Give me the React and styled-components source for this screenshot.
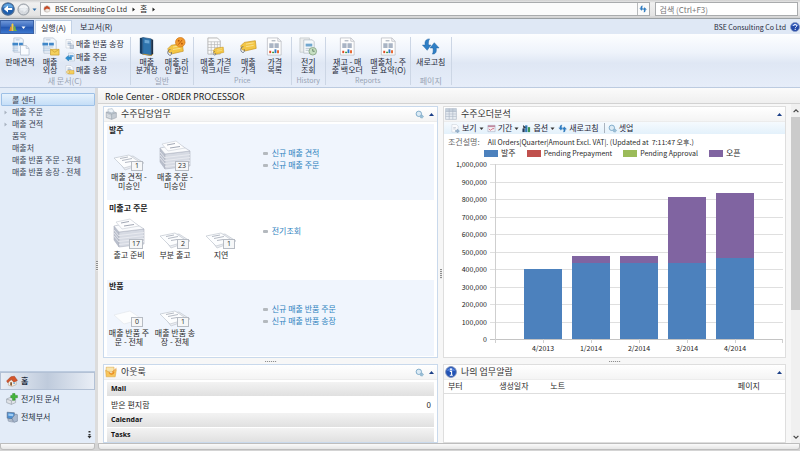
import React from "react";
import styled, { createGlobalStyle, css } from "styled-components";

const Global = createGlobalStyle`
  *, *::before, *::after { box-sizing: border-box; }
  body {
    margin: 0;
    background: #f7f7f7;
    color: #2b2b2b;
    font-family: "Noto Sans CJK KR", "Open Sans", sans-serif;
    font-size: 8px;
    line-height: 12px;
  }
  button, input, table { font: inherit; color: inherit; }
  button { border: 0; padding: 0; background: none; cursor: pointer; }
  h1, h2, h3, p, ul { margin: 0; padding: 0; font-size: inherit; font-weight: 400; }
  ul { list-style: none; }
  a { color: inherit; text-decoration: none; }
  svg { display: block; flex: none; }
`;

/* ---------- Icons ---------- */

const Icon = ({ size = 10, box = 20, height, children }) => (
  <svg width={size} height={height || size} viewBox={`0 0 ${box} ${height ? (box * height) / size : box}`} aria-hidden="true">
    {children}
  </svg>
);

const Sheet = ({ x = 2, y = 1, w = 14, h = 17 }) => (
  <path d={`M${x} ${y}h${w - 4}l4 4v${h - 4}h-${w}z`} fill="#fbfcfe" stroke="#b3bbc8" strokeWidth="0.8" />
);

const Tag = ({ x = 0, y = 0, s = 1 }) => (
  <g transform={`translate(${x} ${y}) scale(${s})`}>
    <path d="M1 7L5 3L18 1L19 10L6 13L2 11z" fill="#f3c644" stroke="#c79322" strokeWidth="0.8" />
    <path d="M7 5l9-1.500M7 8l9-1.500" stroke="#fae59b" strokeWidth="1" />
    <path d="M4 8C1 8 0 12 2 14s4 0 3-3" fill="none" stroke="#5d6570" strokeWidth="1" />
  </g>
);

const QuoteIcon = () => (
  <Icon size={19}>
    <path d="M3 1h8l2 2v13H3z" fill="#eef4fb" stroke="#aab8ca" strokeWidth="0.7" />
    <path d="M1.500 6h6v3h-6zM8.500 6h4v3h-4z" fill="#3f86c8" />
    <path d="M1.500 10.500h6M1.500 12.500h6M1.500 14.500h6M5 3h4" stroke="#9db9d6" strokeWidth="0.8" />
    <path d="M10 9h6l3 3v7h-9z" fill="#fafcff" stroke="#a9b7c9" strokeWidth="0.7" />
    <path d="M16 9v3h3" fill="none" stroke="#a9b7c9" strokeWidth="0.7" />
  </Icon>
);
const InvoiceIcon = () => (
  <Icon size={19}>
    <path d="M3 1h10l3 3v13H3z" fill="#f1f6fb" stroke="#aab8ca" strokeWidth="0.7" />
    <path d="M1.500 6h6v3h-6zM8.500 6h5v3h-5z" fill="#3f86c8" />
    <path d="M2 10.500h11M2 12.500h8M2 14.500h8M5 3h5" stroke="#9db9d6" strokeWidth="0.8" />
    <path d="M10 13h9v6h-9z" fill="#f4d05c" stroke="#c99c2e" strokeWidth="0.7" />
    <path d="M10 13l4.500 3 4.500-3" fill="none" stroke="#c99c2e" strokeWidth="0.7" />
  </Icon>
);
const CreditMemoIcon = () => (
  <Icon>
    <Sheet />
    <path d="M5 6h7M5 9h8M5 12h8" stroke="#7996b8" strokeWidth="1.300" />
    <path d="M10 12h7v7h-7z" fill="#c6d2e1" stroke="#8495ab" strokeWidth="0.8" />
  </Icon>
);
const OrderIcon = () => (
  <Icon>
    <path d="M7 2h9l3 3v13H7z" fill="#e8f0f8" stroke="#9fb0c5" strokeWidth="0.8" />
    <path d="M9 6h8v4H9z" fill="#6aa8dd" />
    <path d="M1 12l6-5v3h6v5H7v3z" fill="#2d91d2" stroke="#1c6da8" strokeWidth="0.8" />
  </Icon>
);
const SalesInvoiceIcon = () => (
  <Icon>
    <Sheet />
    <path d="M5 6h6M5 9h8" stroke="#7996b8" strokeWidth="1.300" />
    <path d="M7 11h11v7H7z" fill="#f4cf5c" stroke="#c29127" strokeWidth="0.8" />
    <circle cx="6" cy="14" r="3" fill="#f7e19a" stroke="#b88d2c" strokeWidth="0.8" />
  </Icon>
);
const JournalIcon = () => (
  <Icon size={19}>
    <path d="M3 1l3-.5v18L3 17z" fill="#173f66" />
    <path d="M6 .5L15 2v17.500L6 18z" fill="#2f74ad" stroke="#1b4a78" strokeWidth="0.7" />
    <path d="M8 3l5 .8v3L8 6.200z" fill="#6ba6d4" />
    <path d="M15 2l2 1v15l-2 1.500z" fill="#1c3048" />
    <path d="M6 18l9 1.500 2-1.500" fill="none" stroke="#c99a3a" strokeWidth="1" />
  </Icon>
);
const DiscountIcon = () => (
  <Icon size={19}>
    <Tag x={0} y={6} s={0.9} />
    <circle cx="14" cy="5.500" r="5" fill="#f29a2e" stroke="#cf7412" strokeWidth="0.7" />
    <path d="M12 8l4-5" stroke="#b85a0c" strokeWidth="1" />
    <circle cx="12.300" cy="4" r="1" fill="#b85a0c" />
    <circle cx="15.700" cy="7" r="1" fill="#b85a0c" />
  </Icon>
);
const WorksheetIcon = () => (
  <Icon size={19}>
    <path d="M2 1h10l3 3v14H2z" fill="#fbfbfb" stroke="#a6a6a6" strokeWidth="0.8" />
    <path d="M2 5h13M2 8h13M2 11h13M2 14h13M5.500 5v13M9 5v13M12 5v13" stroke="#b5b5b5" strokeWidth="0.7" />
    <Tag x={7} y={10} s={0.62} />
  </Icon>
);
const PriceIcon = () => (
  <Icon size={19}>
    <Tag x={1} y={3} s={0.9} />
  </Icon>
);
const ReportIcon = () => (
  <Icon size={19}>
    <path d="M2.500 1h11l3.500 3.500V19h-14.500z" fill="#fdfdfd" stroke="#b9bcc2" strokeWidth="0.8" />
    <path d="M13.500 1v3.500H17" fill="none" stroke="#b9bcc2" strokeWidth="0.8" />
    <path d="M7 4h4" stroke="#7a8696" strokeWidth="0.8" />
    <path d="M4.500 6.500h4.500v5H4.500zM10 6.500h4.500v5H10z" fill="#a9b4c4" />
    <path d="M4.500 14.500h2V17h-2z" fill="#e04a24" />
    <path d="M7.500 15.500h2V17h-2z" fill="#3e9a3c" />
    <path d="M10 13h2v4h-2z" fill="#3078c8" />
    <path d="M12.700 14h2v3h-2z" fill="#e7632a" />
  </Icon>
);
const NavigateIcon = () => (
  <Icon size={19}>
    <path d="M1 1h10v15H1z" fill="#eceeee" stroke="#c2c7c9" strokeWidth="0.8" />
    <path d="M5 3h9l2 2v12H5z" fill="#f5f8fa" stroke="#b3bcc4" strokeWidth="0.8" />
    <path d="M7 7h7v3H7z" fill="#71a7cf" />
    <path d="M7 12h6M7 14h5" stroke="#a9b9c5" strokeWidth="0.8" />
    <circle cx="14.500" cy="15" r="4" fill="#c6dfc2" stroke="#7d9c7c" strokeWidth="0.8" />
    <path d="M14.500 12.500V15h2" fill="none" stroke="#5c7a62" strokeWidth="0.9" />
  </Icon>
);
const RefreshIcon = ({ size = 9 }) => (
  <Icon size={size}>
    <path d="M9 2C5 2 3.500 5 4.500 8.500H1.500L6.500 14l4-5.500H8C7.500 6.500 7.800 4 9 2z" fill="#2f7fc6" stroke="#1d5f9e" strokeWidth="0.5" />
    <path d="M12 18c4 0 4.500-3 4-6.500h3L14 6l-4.500 5.500h3c.5 2 .5 4.500-.5 6.500z" fill="#2f7fc6" stroke="#1d5f9e" strokeWidth="0.5" />
  </Icon>
);
const BackIcon = () => (
  <Icon size={14}>
    <circle cx="10" cy="10" r="9" fill="#1f5fae" stroke="#5a7391" strokeWidth="1.500" />
    <path d="M2.500 8a7.800 7.800 0 0 1 15 0z" fill="#5fa3df" />
    <path d="M4 10l6-5v3.500h6v3h-6V15z" fill="#fff" />
  </Icon>
);
const ForwardIcon = () => (
  <Icon size={13}>
    <circle cx="10" cy="10" r="8.500" fill="#d5d9de" stroke="#8f969e" strokeWidth="1.500" />
    <path d="M3 8a7.500 7.500 0 0 1 14 0z" fill="#f3f5f7" />
    <path d="M16 10l-6-4.500v3H5v3h5v3z" fill="#e9edf1" />
  </Icon>
);
const Caret = ({ color = "#333", size = 5 }) => (
  <Icon size={size} box={10}>
    <path d="M1 3h8L5 8z" fill={color} />
  </Icon>
);
const RightCaret = ({ color = "#222" }) => (
  <Icon size={5} box={10}>
    <path d="M3 1l5 4-5 4z" fill={color} />
  </Icon>
);
const CollapseIcon = () => (
  <Icon size={5} box={10}>
    <path d="M0 8l5-6 5 6z" fill="#1b3f87" />
  </Icon>
);
const CompanyIcon = () => (
  <Icon size={8}>
    <circle cx="10" cy="10" r="8" fill="#d9d4d0" stroke="#a99b91" />
    <path d="M3 7l7-5 7 5v5l-7-3-7 4z" fill="#c64a26" />
    <path d="M8 11h8v5H8z" fill="#f6efe8" />
  </Icon>
);
const AppIcon = () => (
  <Icon size={10}>
    <path d="M1 18c2-1 3-4 3-7s3-3 3 0v7z" fill="#e9862b" />
    <path d="M7 18V6c0-4 4-4 4 0v12z" fill="#f5cf3b" />
    <path d="M12 18v-8c0-3 3-3 3 0s1 7 4 8z" fill="#6fb344" />
  </Icon>
);
const HelpIcon = () => (
  <Icon size={10}>
    <circle cx="10" cy="10" r="9" fill="#2349a8" stroke="#8b9cc4" strokeWidth="1.500" />
    <path d="M3 8a7.500 7.500 0 0 1 14 0z" fill="#5c80d6" />
    <path d="M7 8c0-4 6.500-4 6.500-.5 0 2.500-3 2.500-3 5M10.400 14v2" fill="none" stroke="#fff" strokeWidth="2" />
  </Icon>
);
const InfoIcon = () => (
  <Icon size={12}>
    <circle cx="10" cy="10" r="9" fill="#2152b5" stroke="#7d8fb8" strokeWidth="1.500" />
    <path d="M3 8a7.500 7.500 0 0 1 14 0z" fill="#5785de" />
    <path d="M8 9h3v6M8 15.500h5" fill="none" stroke="#fff" strokeWidth="1.800" />
    <circle cx="10" cy="5.500" r="1.600" fill="#fff" />
  </Icon>
);
const ActivitiesIcon = () => (
  <Icon size={12}>
    <path d="M2 7l9-2 8 3v8l-8 3-9-3z" fill="#c4cbd3" stroke="#8f98a3" strokeWidth="0.8" />
    <path d="M2 7l9 3 8-2M11 10v9" fill="none" stroke="#929ba6" strokeWidth="0.8" />
    <path d="M5 2l7-1 3 5-4 2-6-2z" fill="#eef3f8" stroke="#98a8ba" strokeWidth="0.8" />
    <path d="M3 11l7 3M3 13.500l7 3" stroke="#eef0f2" strokeWidth="1" />
  </Icon>
);
const OutlookIcon = () => (
  <Icon size={12}>
    <path d="M2 2h13v7H2z" fill="#f9e5ad" stroke="#d79c35" strokeWidth="0.8" />
    <path d="M1 7l9 5 9-6-2 12H2z" fill="#f8c65c" stroke="#d79c35" strokeWidth="0.8" />
    <path d="M7 11c2 4 7 3 8-1" fill="none" stroke="#e98b23" strokeWidth="2" />
    <path d="M12 10l7-6" stroke="#e98b23" strokeWidth="1.500" />
  </Icon>
);
const GridIcon = () => (
  <Icon size={12}>
    <path d="M1 1h18v18H1z" fill="#e8edf3" stroke="#a8b4c3" />
    <path d="M1 1h18v5H1z" fill="#c3ceda" />
    <path d="M1 6h18M1 10h18M1 14h18M7 1v18M13 1v18" stroke="#a8b4c3" />
  </Icon>
);
const SetupIcon = () => (
  <Icon size={9}>
    <circle cx="8.500" cy="8.500" r="6" fill="#dcebf5" stroke="#76a5c5" strokeWidth="2" />
    <path d="M13 13l3-2 3 4-3 3-4-1z" fill="#9fc3da" stroke="#6797b8" />
  </Icon>
);
const ViewIcon = () => (
  <Icon size={9}>
    <Sheet />
    <path d="M5 8h6M5 11h5" stroke="#a5b0bf" strokeWidth="1.200" />
    <path d="M10 14h4v-3l5 5-5 4v-3h-4z" fill="#9ab4cf" stroke="#6886a6" strokeWidth="0.7" />
  </Icon>
);
const PeriodIcon = () => (
  <Icon size={9}>
    <path d="M2 3h16v14H2z" fill="#f6f2f6" stroke="#8f9db5" />
    <path d="M2 3h16v4H2z" fill="#c08aa0" />
    <path d="M4 11l4 3 3-3 5-1" fill="none" stroke="#c95870" strokeWidth="1.800" />
  </Icon>
);
const OptionsIcon = () => (
  <Icon size={9}>
    <path d="M1 10h5v8H1z" fill="#263c5c" />
    <path d="M7 3h5v15H7z" fill="#3079b8" />
    <path d="M13 7h5v11h-5z" fill="#3c9256" />
    <path d="M2 2l7 6-3 .5L4 12z" fill="#1c2735" />
  </Icon>
);
const HomeIcon = () => (
  <Icon size={12}>
    <path d="M4 9v8l6 2 7-3V8z" fill="#f6ede1" stroke="#a5917d" strokeWidth="0.8" />
    <path d="M1 10l7-7 6-1 5 7-6 3-4-5-6 6z" fill="#d5562b" stroke="#9c3517" strokeWidth="0.8" />
    <path d="M7 12h3v6l-3-1z" fill="#8a5a33" />
    <path d="M12 12h3v3h-3z" fill="#7fb0d8" />
  </Icon>
);
const PostedIcon = () => (
  <Icon size={12}>
    <path d="M1 10l7-3 8 3v6l-7 3-8-3z" fill="#e0e3e7" stroke="#8a939e" strokeWidth="0.9" />
    <path d="M1 10l8 3 7-3M9 13v6" fill="none" stroke="#8a939e" strokeWidth="0.9" />
    <path d="M11 1h4v3h4v4h-4v4h-4V8H8V4h3z" fill="#43b63a" stroke="#25821f" strokeWidth="0.8" />
  </Icon>
);
const DepartmentsIcon = () => (
  <Icon size={12}>
    <path d="M2 2l12 1v11L2 12z" fill="#4c8fd2" stroke="#50637e" />
    <path d="M4 4l8 .8v4L4 8z" fill="#9ecbf2" />
    <path d="M10 12l6-7 3 1v11l-6 2z" fill="#a9b9ce" stroke="#5f6f88" strokeWidth="0.8" />
    <path d="M3 14l8 1.500v3L4 17z" fill="#c0c9d6" stroke="#6c7b91" strokeWidth="0.8" />
  </Icon>
);

/* Flat documents, or a tall pile when the count is high */
const StackDrawing = ({ kind }) => (
  <svg width="32" height="32" viewBox="0 0 32 32" aria-hidden="true">
    {kind === "pile" && (
      <g strokeWidth="0.6" stroke="#aeb4c1">
        <path d="M1 8l5 6v15l-5-7z" fill="#b9bfcc" />
        <path d="M6 14l25-3v15L6 29z" fill="#d6dae3" />
        <path d="M1 8L20 4l11 7L6 14z" fill="#fafbfd" />
        <path d="M6 17.500l25-3M6 20.500l25-3M6 23.500l25-3M6 26.500l25-3M1 12l5 6M1 15l5 6M1 18l5 6" fill="none" stroke="#eceef3" strokeWidth="0.8" />
        <path d="M3 4l14-3 9 7-17 3z" fill="#fdfdfe" stroke="#c6cbd4" />
        <path d="M8 5l8-1.500M11 8l10-1.500" stroke="#a2a8b5" strokeWidth="1" />
      </g>
    )}
    {kind === "papers" && (
      <g stroke="#b9bfc9" strokeWidth="0.6">
        <path d="M3 18l17-2 11 7-19 7z" fill="#eceef2" />
        <path d="M1 18l15-3 12 8-17 5z" fill="#fcfdfe" />
        <path d="M7 18.500l8-1.500M9 20.500l10-2M12 22.500l6-1" stroke="#a2a8b5" strokeWidth="0.8" />
      </g>
    )}
    {kind === "blank" && <path d="M1 19l16-4 12 8-18 5z" fill="#fcfdfe" stroke="#e0e4ea" strokeWidth="0.6" />}
  </svg>
);

/* ---------- Frame ---------- */

const Page = styled.div`
  display: flex;
  flex-direction: column;
  height: 100vh;
  overflow: hidden;
`;

const Latin = styled.span`
  font-size: 7px;
`;

const AddressRow = styled.header`
  display: flex;
  align-items: center;
  gap: 2px;
  height: 19px;
  flex: none;
  padding: 0 2px 0 1px;
  background: linear-gradient(#cfcfcf, #f0f0f0 3px, #e4e4e4 15px, #cfcfcf);
  border-bottom: 1px solid #9aa0a4;
`;

const AddressField = styled.nav`
  display: flex;
  align-items: center;
  flex: 1;
  gap: 4px;
  height: 14px;
  margin: 0 3px 0 1px;
  padding-left: 2px;
  background: #fbfbfb;
  border: 1px solid #a9abad;
`;

const Crumb = styled.a`
  white-space: nowrap;
`;

const AddressRefresh = styled.button`
  display: grid;
  place-items: center;
  align-self: stretch;
  width: 12px;
  margin-left: auto;
  border-left: 1px solid #b8babc;
`;

const SearchInput = styled.input`
  width: 18%;
  min-width: 142px;
  height: 14px;
  padding: 0 4px;
  background: #fff;
  border: 1px solid #a9abad;
  &::placeholder { color: #777; opacity: 1; }
`;

const TabRow = styled.div`
  display: flex;
  align-items: stretch;
  height: 15px;
  flex: none;
  background: #dfe8f5;
`;

const AppButton = styled.button`
  display: flex;
  align-items: center;
  justify-content: center;
  gap: 3px;
  width: 34px;
  margin-top: 1px;
  background: linear-gradient(#6d96d8, #3b6cc0 45%, #2355ae 50%, #3c78cf);
  border: 1px solid #3b62a5;
`;

const Tab = styled.button`
  margin: 1px 0 0 1px;
  padding: 0 7px;
  color: #1f2a3a;
  white-space: nowrap;
  ${(p) =>
    p.$active &&
    css`
      padding: 0 5px;
      background: #fdfeff;
      border: 1px solid #c3d2e6;
      border-bottom: 0;
    `}
`;

const TabTail = styled.div`
  display: flex;
  align-items: center;
  gap: 4px;
  margin-left: auto;
  color: #1f2a3a;
`;

const Ribbon = styled.div`
  display: flex;
  flex: none;
  height: 54px;
  padding-top: 3px;
  background: linear-gradient(#fdfeff, #eef3fb 35%, #dfe7f4 55%, #e6edf9);
  border-bottom: 1px solid #bccbe0;
`;

const Group = styled.section`
  display: flex;
  flex-direction: column;
  padding: 0 1px;
  height: 48px;
  border-right: 1px solid #ccd6e5;
`;

const GroupItems = styled.div`
  display: flex;
  flex: 1;
`;

const GroupLabel = styled.h3`
  color: #98a3b3;
  font-size: ${(p) => (p.$latin ? "7px" : "8px")};
  line-height: 9px;
  text-align: center;
`;

const RibbonButton = styled.button`
  display: flex;
  flex-direction: column;
  align-items: center;
  gap: 2px;
  width: ${(p) => p.$width}px;
  line-height: 8px;
  white-space: pre;
  color: #1f2a3a;
`;

const SmallList = styled.div`
  display: flex;
  flex-direction: column;
  padding: 0 5px 0 4px;
`;

const SmallButton = styled.button`
  display: flex;
  align-items: center;
  gap: 1px;
  height: 13px;
  color: #1f2a3a;
  white-space: nowrap;
`;

const Body = styled.div`
  display: grid;
  grid-template-columns: 95px 3px minmax(0, 1fr);
  flex: 1;
  min-height: 0;
`;

const Sidebar = styled.aside`
  display: flex;
  flex-direction: column;
  padding: 5px 0 0;
  background: #e3ecf8;
  min-height: 0;
`;

const TreeItem = styled.a`
  display: grid;
  grid-template-columns: 9px 1fr;
  align-items: center;
  height: 12px;
  margin: 0 0 0 1px;
  padding-left: 2px;
  color: #3b4656;
  ${(p) =>
    p.$active &&
    css`
      height: 13px;
      background: linear-gradient(#e6f2fd, #c5def7);
      border: 1px solid #9dc0e6;
      border-radius: 1px;
      padding-left: 1px;
    `}
`;

const AreaNav = styled.nav`
  margin-top: auto;
  border-top: 1px solid #bccbdf;
`;

const AreaLink = styled.a`
  display: flex;
  align-items: center;
  gap: 3px;
  height: 18px;
  padding-left: 6px;
  color: #222d3d;
  ${(p) =>
    p.$active &&
    css`
      background: linear-gradient(90deg, #e9eef6, #bfcbdc 50%, #e9eef6);
      border: 1px solid #b3c1d5;
      padding-left: 5px;
      font-weight: 700;
    `}
`;

const AreaMore = styled.button`
  display: block;
  margin: 4px 3px 4px auto;
`;

const Splitter = styled.div`
  display: grid;
  place-items: center;
  background: #dcdcdc;
`;

const Grip = styled.i`
  display: block;
  width: ${(p) => (p.$wide ? "12px" : "2px")};
  height: ${(p) => (p.$wide ? "1px" : "10px")};
  background: repeating-linear-gradient(${(p) => (p.$wide ? "90deg" : "180deg")}, #8f8f8f 0 1px, #e9e9e9 1px 2px);
`;

const Main = styled.main`
  display: flex;
  flex-direction: column;
  min-width: 0;
  min-height: 0;
`;

const PageTitle = styled.h1`
  flex: none;
  height: 16px;
  padding-left: 7px;
  font-family: "Open Sans", sans-serif;
  font-size: 9px;
  line-height: 17px;
  color: #111;
  background: linear-gradient(#fbfbfb, #efefef);
  border-bottom: 1px solid #d2d2d2;
`;

const Workspace = styled.div`
  display: grid;
  grid-template-columns: minmax(0, 335fr) 5px minmax(0, 343fr) 5px 9px;
  flex: 1;
  min-height: 0;
  padding-left: 5px;
`;

const Column = styled.div`
  display: flex;
  flex-direction: column;
  min-height: 0;
  padding-top: 2px;
  overflow: hidden;
`;

const RowSplitter = styled.div`
  display: grid;
  place-items: center;
  flex: none;
  height: 6px;
`;

const ColumnSplitter = styled.div`
  display: grid;
  place-items: center;
`;

const Panel = styled.section`
  display: flex;
  flex-direction: column;
  flex: ${(p) => (p.$fill ? "1 0 0" : "none")};
  min-height: ${(p) => (p.$fill ? "0" : "252px")};
  overflow: hidden;
  background: #fff;
  border: 1px solid ${(p) => (p.$accent ? "#c9d9ec" : "#dedede")};
`;

const PanelHeader = styled.header`
  display: flex;
  align-items: center;
  flex: none;
  gap: 4px;
  height: 15px;
  padding: 0 3px 0 1px;
  background: linear-gradient(#fff, #f4f4f4);
  border-bottom: 1px solid #ececec;
`;

const PanelTitle = styled.h2`
  flex: 1;
  font-size: 9px;
  line-height: 14px;
  color: #333;
`;

const HeaderButton = styled.button`
  display: grid;
  place-items: center;
  min-width: 6px;
`;

/* ---------- Activities ---------- */

const Cues = styled.div`
  display: flex;
  flex-direction: column;
  gap: 2px;
  padding: 2px 3px 1px;
`;

const CueGroup = styled.section`
  display: grid;
  grid-template-columns: 10fr 11fr;
  height: 76px;
  background: ${(p) => (p.$tinted ? "#f0f5fd" : "#fff")};
`;

const CueTitle = styled.h3`
  padding-left: 2px;
  margin-bottom: 4px;
  font-weight: 700;
  color: #222;
`;

const CueRow = styled.div`
  display: flex;
  gap: 2px;
`;

const Cue = styled.button`
  width: 44px;
  line-height: 9px;
  white-space: pre;
`;

const CueArt = styled.span`
  display: grid;
  place-items: center;
  position: relative;
  height: 32px;
`;

const CueCount = styled.span`
  position: absolute;
  right: 8px;
  bottom: 1px;
  min-width: 12px;
  padding: 0 2px;
  font-family: "Open Sans", sans-serif;
  font-size: 7px;
  line-height: 8px;
  text-align: center;
  background: #f6f7f8;
  border: 1px solid #b7bcc4;
`;

const CueLinks = styled.ul`
  padding-top: 23px;
`;

const CueLink = styled.a`
  display: flex;
  align-items: center;
  gap: 4px;
  color: #2f83c0;
  &::before {
    content: "";
    width: 5px;
    height: 3px;
    border-radius: 1px;
    background: #b4b9be;
  }
`;

/* ---------- Outlook ---------- */

const OutlookList = styled.div`
  padding: 2px 3px 0;
`;

const OutlookHead = styled.h3`
  height: 14px;
  margin-bottom: 1px;
  padding-left: 4px;
  font-family: "Open Sans", sans-serif;
  font-size: 7px;
  font-weight: 700;
  line-height: 14px;
  color: #111;
  background: linear-gradient(#f3f3f3, #e0e0e0);
`;

const OutlookRow = styled.a`
  display: flex;
  justify-content: space-between;
  height: 16px;
  padding: 0 3px 0 4px;
  line-height: 15px;
`;

/* ---------- Chart ---------- */

const Toolbar = styled.div`
  display: flex;
  align-items: center;
  height: 12px;
  padding-left: 7px;
  background: linear-gradient(#f5fafe, #e3f1fb);
`;

const ToolButton = styled.button`
  display: flex;
  align-items: center;
  gap: 2px;
  margin-right: 3px;
  color: #223;
  white-space: nowrap;
`;

const ToolDivider = styled.i`
  width: 1px;
  height: 10px;
  margin: 0 3px 0 2px;
  background: #aab4bf;
`;

const ChartNote = styled.p`
  display: flex;
  gap: 8px;
  padding-left: 4px;
  margin-top: 2px;
  white-space: pre;
`;

const NoteLabel = styled.span`
  color: #666;
`;

const Legend = styled.ul`
  display: flex;
  gap: 11px;
  padding-left: 40px;
  line-height: 10px;
`;

const LegendItem = styled.li`
  display: flex;
  align-items: center;
  gap: 3px;
  white-space: nowrap;
  &::before {
    content: "";
    width: 14px;
    height: 7px;
    background: ${(p) => p.$color};
  }
`;

const ChartSvg = styled.svg`
  width: 100%;
  height: 198px;
  text {
    font-family: "Noto Sans CJK KR", sans-serif;
    font-size: 7px;
    fill: #222;
  }
`;

const BARS = [
  { label: "4/2013", blue: 400, purple: 0 },
  { label: "1/2014", blue: 437, purple: 38 },
  { label: "2/2014", blue: 437, purple: 38 },
  { label: "3/2014", blue: 437, purple: 377 },
  { label: "4/2014", blue: 463, purple: 372 },
];
const BASE = 181;
const UNIT = 0.175;

const Chart = () => (
  <ChartSvg viewBox="0 0 341 198" role="img" aria-label="수주오더분석">
    {Array.from({ length: 11 }, (_, i) => {
      const y = Math.round(BASE - i * 100 * UNIT) + 0.5;
      return (
        <g key={i}>
          <path d={`M46 ${y}H339`} stroke={i ? "#dfdfdf" : "#c4c4c4"} />
          <text x="43" y={y + 2} textAnchor="end">
            {(i * 100000).toLocaleString("en-US")}
          </text>
        </g>
      );
    })}
    <path d={`M51.500 6V${BASE + 4}M338.500 ${BASE}v4`} stroke="#cfcfcf" />
    {BARS.map((b, i) => {
      const x = 80 + i * 48;
      const h1 = Math.round(b.blue * UNIT);
      const h2 = Math.round(b.purple * UNIT);
      return (
        <g key={b.label}>
          <rect x={x} y={BASE - h1} width="38" height={h1} fill="#4c81bd" />
          <rect x={x} y={BASE - h1 - h2} width="38" height={h2} fill="#8064a1" />
          <path d={`M${x + 19.5} ${BASE}v4`} stroke="#cfcfcf" />
          <text x={x + 19} y="193" textAnchor="middle">
            {b.label}
          </text>
        </g>
      );
    })}
  </ChartSvg>
);

/* ---------- Notifications ---------- */

const NoteTable = styled.table`
  width: 100%;
  border-collapse: collapse;
  table-layout: fixed;
  th {
    height: 13px;
    padding: 0 0 0 4px;
    font-weight: 400;
    text-align: left;
    border-bottom: 1px solid #dedede;
  }
`;

const NoteCol = styled.col`
  width: ${(p) => p.$share}%;
`;

/* ---------- Scroll bar and status ---------- */

const ScrollBar = styled.div`
  display: flex;
  flex-direction: column;
  align-items: center;
  background: #f0f0f0;
`;

const ScrollArrow = styled.button`
  display: grid;
  place-items: center;
  width: 9px;
  height: 13px;
  margin-top: ${(p) => (p.$end ? "auto" : "0")};
`;

const ScrollThumb = styled.div`
  width: 100%;
  height: 57%;
  background: #cbcbcb;
`;

const StatusBar = styled.footer`
  display: grid;
  grid-template-columns: 95px 1fr;
  gap: 3px;
  flex: none;
  height: 8px;
  padding-bottom: 1px;
  background: #d4d4d4;
`;

const StatusCell = styled.div`
  background: linear-gradient(#fafafa, #e6e6e6);
  border: 1px solid #bdbdbd;
  border-radius: 0 0 3px 3px;
`;

/* ---------- Data ---------- */

const TREE = [
  { label: "롤 센터", active: true },
  { label: "매출 주문", branch: true },
  { label: "매출 견적", branch: true },
  { label: "품목" },
  { label: "매출처" },
  { label: "매출 반품 주문 - 전체" },
  { label: "매출 반품 송장 - 전체" },
];

const GROUPS = [
  {
    label: "일반",
    items: [
      { label: "매출\n분개장", width: 30, icon: <JournalIcon /> },
      { label: "매출 라\n인 할인", width: 30, icon: <DiscountIcon /> },
    ],
  },
  {
    label: "Price",
    latin: true,
    items: [
      { label: "매출 가격\n워크시트", width: 42, icon: <WorksheetIcon /> },
      { label: "매출\n가격", width: 23, icon: <PriceIcon /> },
      { label: "가격\n목록", width: 30, icon: <ReportIcon /> },
    ],
  },
  { label: "History", latin: true, items: [{ label: "전기\n조회", width: 31, icon: <NavigateIcon /> }] },
  {
    label: "Reports",
    latin: true,
    items: [
      { label: "재고 - 매\n출 백오더", width: 41, icon: <ReportIcon /> },
      { label: "매출처 - 주\n문 요약(O)", width: 41, icon: <ReportIcon /> },
    ],
  },
  { label: "페이지", items: [{ label: "새로고침", width: 38, icon: <RefreshIcon size={19} /> }] },
];

const CUES = [
  {
    title: "발주",
    tinted: true,
    cues: [
      { label: "매출 견적 -\n미승인", count: 1, kind: "papers" },
      { label: "매출 주문 -\n미승인", count: 23, kind: "pile" },
    ],
    links: ["신규 매출 견적", "신규 매출 주문"],
  },
  {
    title: "미출고 주문",
    cues: [
      { label: "출고 준비", count: 17, kind: "pile" },
      { label: "부분 출고", count: 2, kind: "papers" },
      { label: "지연", count: 1, kind: "papers" },
    ],
    links: ["전기조회"],
  },
  {
    title: "반품",
    tinted: true,
    cues: [
      { label: "매출 반품 주\n문 - 전체", count: 0, kind: "blank" },
      { label: "매출 반품 송\n장 - 전체", count: 1, kind: "papers" },
    ],
    links: ["신규 매출 반품 주문", "신규 매출 반품 송장"],
  },
];

const Header = ({ icon, title, setup }) => (
  <PanelHeader>
    {icon}
    <PanelTitle>{title}</PanelTitle>
    {setup && (
      <HeaderButton aria-label="설정">
        <SetupIcon />
      </HeaderButton>
    )}
    <HeaderButton aria-label="접기">
      <CollapseIcon />
    </HeaderButton>
  </PanelHeader>
);

export default function App() {
  return (
    <Page>
      <Global />
      <AddressRow>
        <button aria-label="뒤로"><BackIcon /></button>
        <button aria-label="앞으로"><ForwardIcon /></button>
        <button aria-label="기록"><Caret color="#2c6ba5" /></button>
        <AddressField>
          <CompanyIcon />
          <Crumb href="#company"><Latin>BSE Consulting Co Ltd</Latin></Crumb>
          <RightCaret />
          <Crumb href="#home">홈</Crumb>
          <RightCaret />
          <AddressRefresh aria-label="새로고침"><RefreshIcon size={8} /></AddressRefresh>
        </AddressField>
        <SearchInput type="text" aria-label="검색" placeholder="검색 (Ctrl+F3)" />
      </AddressRow>

      <TabRow>
        <AppButton aria-label="메뉴">
          <AppIcon />
          <Caret color="#fff" />
        </AppButton>
        <Tab $active>실행(A)</Tab>
        <Tab>보고서(R)</Tab>
        <TabTail>
          <Latin>BSE Consulting Co Ltd</Latin>
          <button aria-label="도움말"><HelpIcon /></button>
        </TabTail>
      </TabRow>

      <Ribbon>
        <Group>
          <GroupItems>
            <RibbonButton $width={38}><QuoteIcon />판매견적</RibbonButton>
            <RibbonButton $width={22}><InvoiceIcon />{"매출\n외상"}</RibbonButton>
            <SmallList>
              <SmallButton><CreditMemoIcon />매출 반품 송장</SmallButton>
              <SmallButton><OrderIcon />매출 주문</SmallButton>
              <SmallButton><SalesInvoiceIcon />매출 송장</SmallButton>
            </SmallList>
          </GroupItems>
          <GroupLabel>새 문서(C)</GroupLabel>
        </Group>
        {GROUPS.map((g) => (
          <Group key={g.label}>
            <GroupItems>
              {g.items.map((it) => (
                <RibbonButton key={it.label} $width={it.width}>
                  {it.icon}
                  {it.label}
                </RibbonButton>
              ))}
            </GroupItems>
            <GroupLabel $latin={g.latin}>{g.label}</GroupLabel>
          </Group>
        ))}
      </Ribbon>

      <Body>
        <Sidebar>
          {TREE.map((t) => (
            <TreeItem key={t.label} href="#list" $active={t.active}>
              <span>{t.branch && <RightCaret color="#a9b3c0" />}</span>
              {t.label}
            </TreeItem>
          ))}
          <AreaNav>
            <AreaLink href="#home" $active><HomeIcon />홈</AreaLink>
            <AreaLink href="#posted"><PostedIcon />전기된 문서</AreaLink>
            <AreaLink href="#departments"><DepartmentsIcon />전체부서</AreaLink>
            <AreaMore aria-label="더 보기">
              <Icon size={5} box={10} height={9}>
                <path d="M3 2h4v3H3zM3 8h4v3H3zM1 12h8l-4 5z" fill="#333" />
              </Icon>
            </AreaMore>
          </AreaNav>
        </Sidebar>
        <Splitter><Grip /></Splitter>
        <Main>
          <PageTitle>Role Center - ORDER PROCESSOR</PageTitle>
          <Workspace>
            <Column>
              <Panel $accent>
                <Header icon={<ActivitiesIcon />} title="수주담당업무" setup />
                <Cues>
                  {CUES.map((g) => (
                    <CueGroup key={g.title} $tinted={g.tinted}>
                      <div>
                        <CueTitle>{g.title}</CueTitle>
                        <CueRow>
                          {g.cues.map((c) => (
                            <Cue key={c.label}>
                              <CueArt>
                                <StackDrawing kind={c.kind} />
                                <CueCount>{c.count}</CueCount>
                              </CueArt>
                              {c.label}
                            </Cue>
                          ))}
                        </CueRow>
                      </div>
                      <CueLinks>
                        {g.links.map((l) => (
                          <li key={l}><CueLink href="#new">{l}</CueLink></li>
                        ))}
                      </CueLinks>
                    </CueGroup>
                  ))}
                </Cues>
              </Panel>
              <RowSplitter><Grip $wide /></RowSplitter>
              <Panel $accent $fill>
                <Header icon={<OutlookIcon />} title="아웃룩" setup />
                <OutlookList>
                  <OutlookHead>Mail</OutlookHead>
                  <OutlookRow href="#inbox"><span>받은 편지함</span><span>0</span></OutlookRow>
                  <OutlookHead>Calendar</OutlookHead>
                  <OutlookHead>Tasks</OutlookHead>
                </OutlookList>
              </Panel>
            </Column>
            <ColumnSplitter><Grip /></ColumnSplitter>
            <Column>
              <Panel>
                <Header icon={<GridIcon />} title="수주오더분석" />
                <Toolbar>
                  <ToolButton><ViewIcon />보기 <Caret /></ToolButton>
                  <ToolButton><PeriodIcon />기간 <Caret /></ToolButton>
                  <ToolButton><OptionsIcon />옵션 <Caret /></ToolButton>
                  <ToolButton><RefreshIcon />새로고침</ToolButton>
                  <ToolDivider />
                  <ToolButton><SetupIcon />셋업</ToolButton>
                </Toolbar>
                <ChartNote>
                  <NoteLabel>조건설명:</NoteLabel>
                  <Latin>{"All Orders|Quarter|Amount Excl. VAT|. (Updated at  7:11:47 오후.)"}</Latin>
                </ChartNote>
                <Legend>
                  <LegendItem $color="#4c81bd">발주</LegendItem>
                  <LegendItem $color="#c0504d"><Latin>Pending Prepayment</Latin></LegendItem>
                  <LegendItem $color="#9bbb59"><Latin>Pending Approval</Latin></LegendItem>
                  <LegendItem $color="#8064a1">오픈</LegendItem>
                </Legend>
                <Chart />
              </Panel>
              <RowSplitter><Grip $wide /></RowSplitter>
              <Panel $fill>
                <Header icon={<InfoIcon />} title="나의 업무알람" />
                <NoteTable>
                  <colgroup>
                    <NoteCol $share={15} />
                    <NoteCol $share={15} />
                    <NoteCol $share={55} />
                    <NoteCol $share={15} />
                  </colgroup>
                  <thead>
                    <tr><th>부터</th><th>생성일자</th><th>노트</th><th>페이지</th></tr>
                  </thead>
                </NoteTable>
              </Panel>
            </Column>
            <span />
            <ScrollBar>
              <ScrollArrow aria-label="위로">
                <Icon size={6} box={10}><path d="M1 7l4-4 4 4" fill="none" stroke="#444" strokeWidth="2" /></Icon>
              </ScrollArrow>
              <ScrollThumb />
              <ScrollArrow $end aria-label="아래로">
                <Icon size={6} box={10}><path d="M1 3l4 4 4-4" fill="none" stroke="#444" strokeWidth="2" /></Icon>
              </ScrollArrow>
            </ScrollBar>
          </Workspace>
        </Main>
      </Body>
      <StatusBar><StatusCell /><StatusCell /></StatusBar>
    </Page>
  );
}
